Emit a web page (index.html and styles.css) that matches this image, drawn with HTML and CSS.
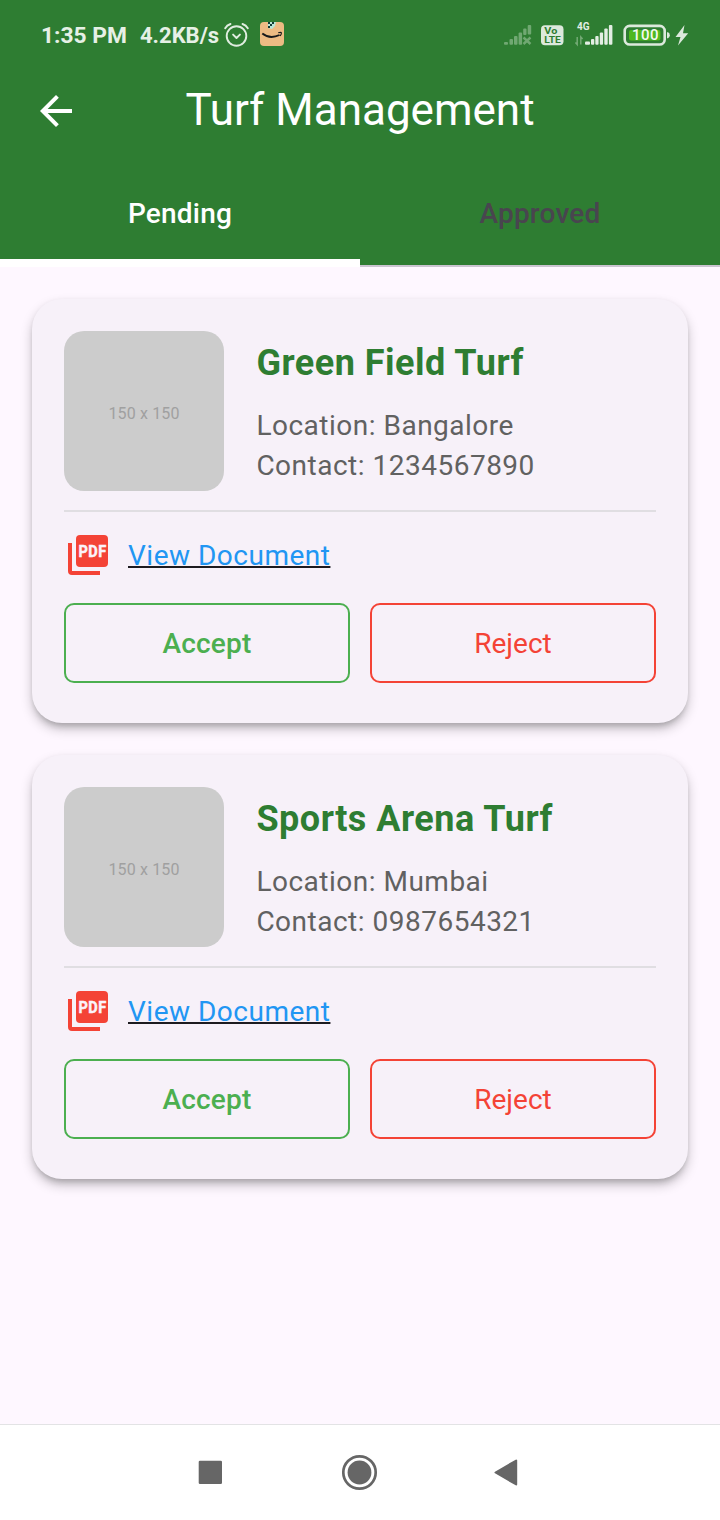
FILE: index.html
```html
<!DOCTYPE html>
<html lang="en">
<head>
<meta charset="utf-8">
<title>Turf Management</title>
<link rel="stylesheet" href="styles.css">
</head>
<body>
<div class="screen">
  <header class="header">
    <div class="status">
      <span class="clock">1:35 PM</span>
      <span class="speed">4.2KB/s</span>
      <svg class="alarm" width="26" height="26" viewBox="0 0 26 26" fill="none" stroke="#e0ede0" stroke-width="1.9" stroke-linecap="round" stroke-linejoin="round">
        <circle cx="13.500" cy="14" r="9.800"/><path d="M10.100 12.600l3.400 3.400 3.400-3.400M2.200 6.200Q3.900 3.200 7.500 2M24.800 6.200Q23.100 3.200 19.500 2"/>
      </svg>
      <svg class="shop" width="24" height="24" viewBox="0 0 24 24">
        <rect width="24" height="24" rx="4" fill="#edbb83"/>
        <path d="M8 0h8l-1 4-3 3-4-1z" fill="#b9e6d6"/>
        <path d="M8 0h2v2h2v2h-2v2H8V4h2V2H8zM12 0h2v2h-2z" fill="#113b35"/>
        <path d="M2.300 11.500q7.500 6 17.300 1.500" fill="none" stroke="#17191b" stroke-width="1.900"/>
        <path d="M18.200 10.800q3-.9 3.200 0t-1.200 3.200" fill="none" stroke="#17191b" stroke-width="1.100"/>
      </svg>
      <svg class="signals" width="200" height="36" viewBox="0 0 200 36">
        <g fill="#70a872">
          <rect x="4" y="25" width="4" height="2.700" rx="1"/><rect x="9.500" y="22" width="3.500" height="5.700" rx="1"/><rect x="14" y="19" width="3.500" height="8.700" rx="1"/><rect x="18.600" y="15.500" width="3.500" height="12.200" rx="1"/><rect x="23.200" y="11.500" width="3.300" height="6.500" rx="1"/><rect x="27.700" y="8" width="3.500" height="9.500" rx="1"/>
          <path d="M23.500 20.500l7 6.500M30.500 20.500L23.500 27" stroke="#70a872" stroke-width="2.400"/>
        </g>
        <rect x="41" y="8.300" width="22.500" height="20" rx="4" fill="#dce9dc"/>
        <text class="badge-text" x="44.300" y="16.800" textLength="13" lengthAdjust="spacingAndGlyphs">Vo</text>
        <text class="badge-text" x="44.300" y="26.300" textLength="16.500" lengthAdjust="spacingAndGlyphs">LTE</text>
        <text class="net-text" x="77" y="13.200">4G</text>
        <path d="M77.200 20v7.500l-1.800-2M80.800 27.500V20l1.800 2" fill="none" stroke="#74aa75" stroke-width="1.500"/>
        <g fill="#e3eee3">
          <rect x="85" y="24.600" width="5" height="3.100" rx="1"/><rect x="91" y="22" width="3.300" height="5.700" rx="1"/><rect x="95.300" y="19" width="3.300" height="8.700" rx="1"/><rect x="99.800" y="15.500" width="3.300" height="12.200" rx="1"/><rect x="104.300" y="11.500" width="3.400" height="16.200" rx="1"/><rect x="108.900" y="8" width="3.500" height="19.700" rx="1"/>
        </g>
        <rect x="124.700" y="8.900" width="40" height="18.600" rx="5" fill="none" stroke="#dce9dc" stroke-width="2.600"/>
        <rect x="129" y="12.900" width="31.500" height="10.500" rx="2" fill="#4fb81f"/>
        <path d="M167 15.200h1q1.800.5 1.800 3t-1.800 3h-1z" fill="#dce9dc"/>
        <text class="battery-text" x="145.500" y="23.300">100</text>
        <path d="M184.500 8L175.500 20h5l-2.500 8.500L188.200 16.200h-5.200z" fill="#dce9dc"/>
      </svg>
    </div>
    <div class="appbar">
      <svg class="back" width="48" height="48" viewBox="0 0 24 24"><path d="M20 11H7.830l5.590-5.590L12 4l-8 8 8 8 1.410-1.410L7.830 13H20v-2z" fill="#fff"/></svg>
      <h1 class="title">Turf Management</h1>
    </div>
    <nav class="tabs">
      <div class="tab tab-active">Pending</div>
      <div class="tab">Approved</div>
    </nav>
  </header>

  <main class="list">
    <article class="card">
      <div class="info">
        <div class="thumb">150 x 150</div>
        <div class="details">
          <h2 class="name">Green Field Turf</h2>
          <p class="line">Location: Bangalore</p>
          <p class="line">Contact: 1234567890</p>
        </div>
      </div>
      <hr class="divider">
      <div class="document">
        <svg width="48" height="48" viewBox="0 0 48 48"><path d="M6 12v28q0 2 2 2h28" fill="none" stroke="#f44336" stroke-width="4"/><rect x="12" y="4" width="32" height="32" rx="4" fill="#f44336"/><g transform="translate(14.500 26) scale(.88 1)"><text class="pdf-text">PDF</text></g></svg>
        <a class="link">View Document</a>
      </div>
      <div class="actions">
        <button class="button accept">Accept</button>
        <button class="button reject">Reject</button>
      </div>
    </article>

    <article class="card">
      <div class="info">
        <div class="thumb">150 x 150</div>
        <div class="details">
          <h2 class="name">Sports Arena Turf</h2>
          <p class="line">Location: Mumbai</p>
          <p class="line">Contact: 0987654321</p>
        </div>
      </div>
      <hr class="divider">
      <div class="document">
        <svg width="48" height="48" viewBox="0 0 48 48"><path d="M6 12v28q0 2 2 2h28" fill="none" stroke="#f44336" stroke-width="4"/><rect x="12" y="4" width="32" height="32" rx="4" fill="#f44336"/><g transform="translate(14.500 26) scale(.88 1)"><text class="pdf-text">PDF</text></g></svg>
        <a class="link">View Document</a>
      </div>
      <div class="actions">
        <button class="button accept">Accept</button>
        <button class="button reject">Reject</button>
      </div>
    </article>
  </main>

  <footer class="navbar">
    <svg width="720" height="95" viewBox="0 0 720 95" fill="#666">
      <rect x="198.700" y="35.800" width="23.300" height="23.300" rx="1.300"/>
      <circle cx="359.500" cy="47.500" r="16.200" fill="none" stroke="#666" stroke-width="2.700"/>
      <circle cx="359.500" cy="47.500" r="11.900"/>
      <path d="M495.500 47.500L516.200 35.500V59.500z" stroke="#666" stroke-width="2" stroke-linejoin="round"/>
    </svg>
  </footer>
</div>
</body>
</html>
```
FILE: styles.css
```css
* { box-sizing: border-box; }
body { margin: 0; font-family: Roboto, sans-serif; }
h1, h2, p { margin: 0; font-weight: 400; }

.screen {
  display: flex;
  flex-direction: column;
  width: 720px;
  height: 1520px;
  overflow: hidden;
  background: #fef7ff;
}
.header { height: 267px; background: #2e7d32; }

.status {
  display: flex;
  align-items: flex-start;
  height: 55px;
  padding: 14px 20px 0 41px;
  color: #e6f0e6;
  font-size: 22.8px;
  font-weight: 700;
  line-height: 43px;
}
.clock { width: 99px; white-space: nowrap; }
.speed { width: 83px; font-size: 22px; white-space: nowrap; }
.alarm { margin-top: 8px; }
.shop { margin: 8px 0 0 11px; }
.signals { margin: 3px 0 0 auto; }
.badge-text { font-size: 9px; font-weight: 700; fill: #2e7d32; }
.net-text { font-size: 10px; font-weight: 700; fill: #e3eee3; }
.battery-text { font-size: 15px; font-weight: 500; fill: #f4faf2; text-anchor: middle; letter-spacing: .5px; }

.appbar {
  display: grid;
  grid-template-columns: 80px 1fr 80px;
  align-items: center;
  height: 112px;
}
.back { margin-left: 32px; }
.title {
  padding-bottom: 2px;
  color: #fff;
  font-size: 44px;
  line-height: 56px;
  text-align: center;
}

.tabs { display: grid; grid-template-columns: 1fr 1fr; height: 100px; }
.tab {
  height: 100px;
  border-bottom: 2px solid #cac4d0;
  color: #49454f;
  font-size: 28px;
  font-weight: 500;
  line-height: 94px;
  letter-spacing: .2px;
  text-align: center;
}
.tab-active { border-bottom: 8px solid #fff; color: #fff; }

.list {
  display: flex;
  flex: 1;
  flex-direction: column;
  gap: 32px;
  padding: 32px;
}
.card {
  height: 424px;
  padding: 32px;
  border-radius: 30px;
  background: #f7f1f9;
  box-shadow: 0 6px 6px -3px rgba(0, 0, 0, .16), 0 6px 12px rgba(0, 0, 0, .22), 0 1px 4px rgba(0, 0, 0, .04);
}
.info { display: flex; gap: 32px; height: 160px; }
.thumb {
  width: 160px;
  height: 160px;
  border-radius: 20px;
  background: #ccc;
  color: #a0a0a0;
  font-size: 16px;
  line-height: 165px;
  letter-spacing: .15px;
  text-align: center;
}
.details { padding: 6px 0 0 .4px; }
.name {
  margin-bottom: 17px;
  color: #2e7d32;
  font-size: 36px;
  font-weight: 700;
  line-height: 52px;
  letter-spacing: .5px;
}
.line { color: #616161; font-size: 28px; line-height: 40px; letter-spacing: .5px; }
.divider { height: 2px; margin: 19px 0; border: 0; background: #e0dee2; }
.document { display: flex; align-items: center; gap: 16px; height: 48px; }
.pdf-text { font-size: 16.5px; font-weight: 700; letter-spacing: .5px; fill: #fbf3fa; stroke: #fbf3fa; stroke-width: .5px; }
.link {
  padding-top: 2px;
  color: #2196f3;
  font-size: 28px;
  line-height: 40px;
  letter-spacing: .5px;
  text-decoration: underline #1d1b20 1.5px;
  text-decoration-skip-ink: none;
  text-underline-offset: 1px;
}
.actions { display: grid; grid-template-columns: 1fr 1fr; gap: 20px; margin-top: 24px; }
.button {
  height: 80px;
  padding: 0;
  border: 2px solid;
  border-radius: 10px;
  background: none;
  font-family: inherit;
  font-size: 28px;
  letter-spacing: .2px;
}
.accept { border-color: #4caf50; color: #4caf50; font-weight: 500; }
.reject { border-color: #f44336; color: #f44336; font-weight: 400; letter-spacing: 0; }

.navbar { height: 96px; border-top: 1px solid #e3e3e5; background: #fff; }
.navbar svg { display: block; }
```
